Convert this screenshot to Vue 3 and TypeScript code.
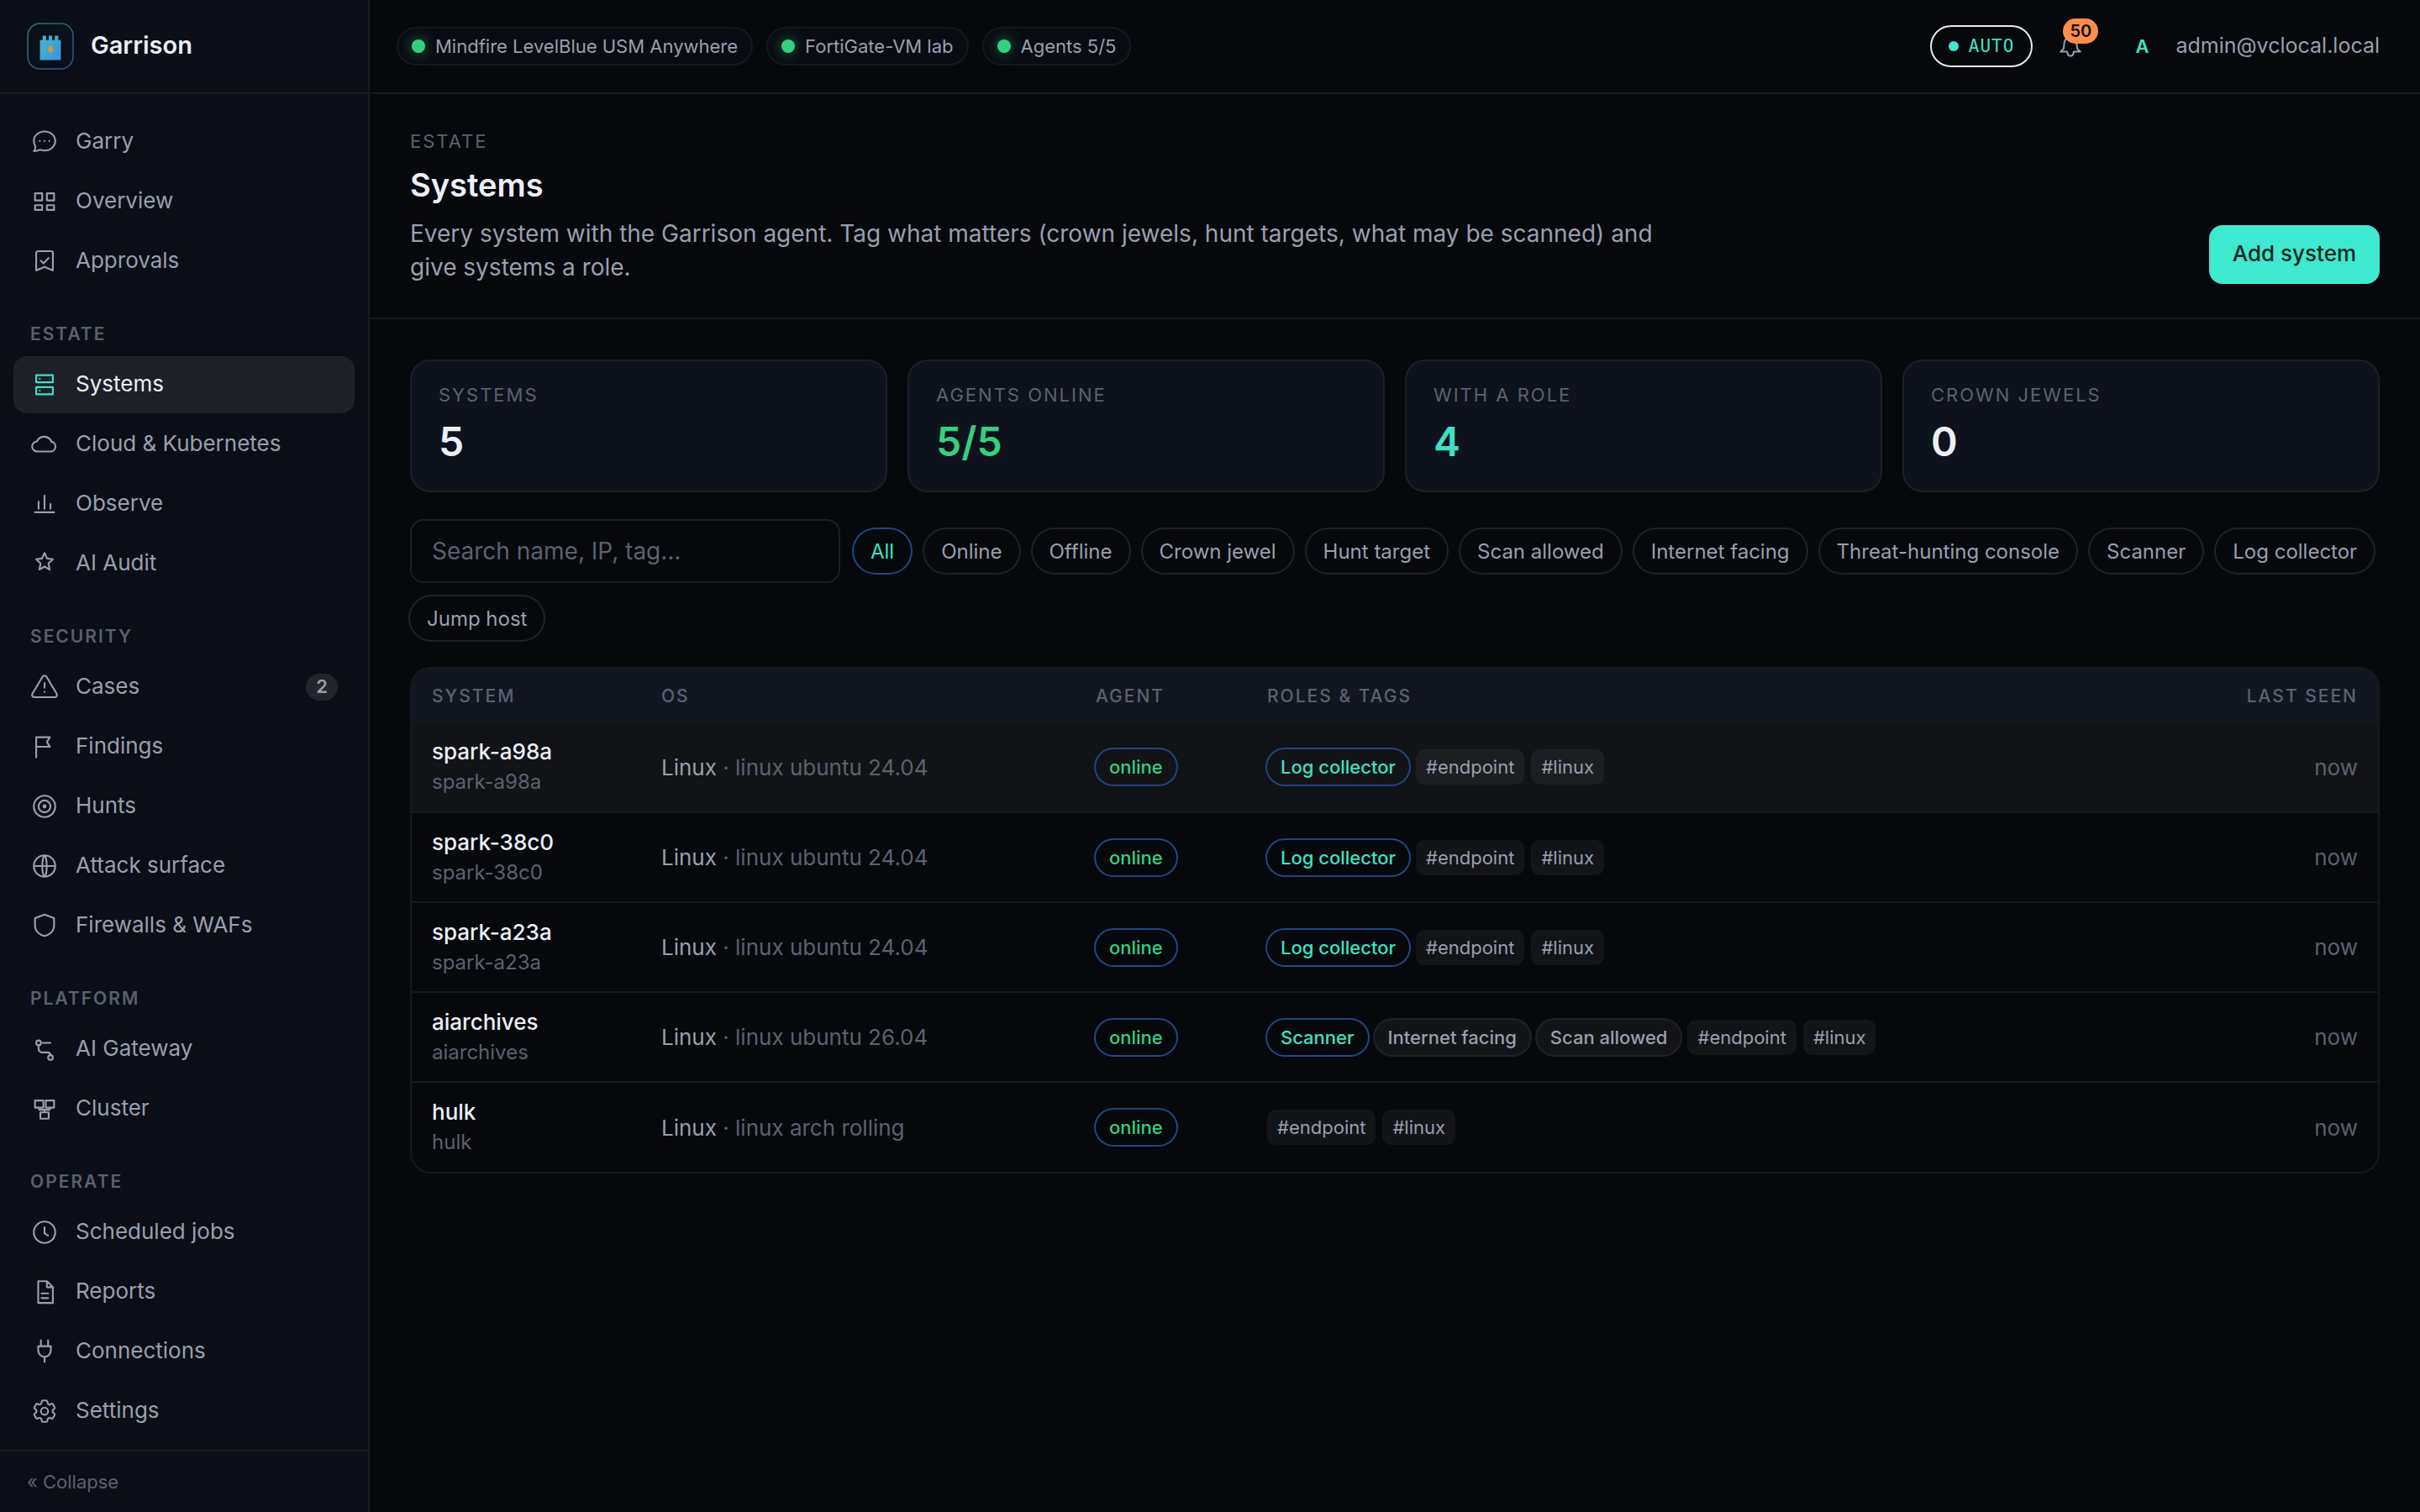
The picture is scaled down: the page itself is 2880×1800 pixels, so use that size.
<script setup lang="ts">
import { ref } from 'vue'

interface NavItem {
  label: string
  icon: string
  active?: boolean
  count?: number
}
interface NavGroup {
  title?: string
  items: NavItem[]
}
interface SystemRow {
  name: string
  host: string
  family: string
  distro: string
  role?: string
  flags: string[]
  tags: string[]
}

const nav: NavGroup[] = [
  {
    items: [
      { label: 'Garry', icon: 'chat' },
      { label: 'Overview', icon: 'grid' },
      { label: 'Approvals', icon: 'approve' },
    ],
  },
  {
    title: 'Estate',
    items: [
      { label: 'Systems', icon: 'server', active: true },
      { label: 'Cloud & Kubernetes', icon: 'cloud' },
      { label: 'Observe', icon: 'bars' },
      { label: 'AI Audit', icon: 'star' },
    ],
  },
  {
    title: 'Security',
    items: [
      { label: 'Cases', icon: 'alert', count: 2 },
      { label: 'Findings', icon: 'flag' },
      { label: 'Hunts', icon: 'target' },
      { label: 'Attack surface', icon: 'globe' },
      { label: 'Firewalls & WAFs', icon: 'shield' },
    ],
  },
  {
    title: 'Platform',
    items: [
      { label: 'AI Gateway', icon: 'route' },
      { label: 'Cluster', icon: 'cluster' },
    ],
  },
  {
    title: 'Operate',
    items: [
      { label: 'Scheduled jobs', icon: 'clock' },
      { label: 'Reports', icon: 'file' },
      { label: 'Connections', icon: 'plug' },
      { label: 'Settings', icon: 'gear' },
    ],
  },
]

const icons: Record<string, string> = {
  chat: 'M12 3.2c5 0 9 3.5 9 8s-4 8-9 8c-1.400 0-2.700-.3-3.800-.7-1.500.8-3.200 1.200-5.100 1.200 1.100-1.300 1.500-2.500 1.200-4C3.500 14.400 3 12.900 3 11.200c0-4.500 4-8 9-8zM8 11.200h.01M12 11.200h.01M16 11.200h.01',
  grid: 'M4 5h6v6H4zM14 5h6v6h-6zM4 15h6v4H4zM14 15h6v4h-6z',
  approve: 'M5 19.700V5a1.500 1.500 0 0 1 1.500-1.500h11A1.500 1.500 0 0 1 19 5v14.700l-7-3-7 3zM8.800 11.500l2.300 2.300 4.300-4.500',
  server: 'M5 4h14v6H5zM5 14h14v6H5zM8 7h.01M8 17h.01',
  cloud: 'M6 18a4.200 4.200 0 0 1-.3-8.500 6.500 6.500 0 0 1 12.100.3A4.150 4.150 0 0 1 17.500 18z',
  bars: 'M4 19h16M7 16v-6M12 16V5M17 16v-4',
  star: 'M12 3l2.100 4.700 4.900.6-3.700 3.500 1 5.200-4.300-2.500-4.300 2.500 1-5.200L5 8.300l4.900-.6z',
  alert: 'M10.290 3.360L1.820 17.500a2 2 0 0 0 1.710 3h16.940a2 2 0 0 0 1.710-3L13.710 3.360a2 2 0 0 0-3.420 0zM12 8.500v4M12 16h.01',
  flag: 'M5 21V4h11.500l-2.500 4 2.500 4H5',
  target: 'M21 12a9 9 0 1 1-18 0 9 9 0 0 1 18 0zM17 12a5 5 0 1 1-10 0 5 5 0 0 1 10 0zM13 12a1 1 0 1 1-2 0 1 1 0 0 1 2 0z',
  globe: 'M21 12a9 9 0 1 1-18 0 9 9 0 0 1 18 0zM3 12h18M12 3c2.500 2.700 2.500 15.300 0 18M12 3c-2.500 2.700-2.500 15.300 0 18',
  shield: 'M12 2.700l8 3V12c0 4.600-3.600 7.600-8 8.600-4.400-1-8-4-8-8.600V5.700z',
  route: 'M9 6.700a2 2 0 1 1-4 0 2 2 0 0 1 4 0zM19 19a2 2 0 1 1-4 0 2 2 0 0 1 4 0zM10.500 6.700H17M7 8.700v3a3 3 0 0 0 3 3h4.500a2.500 2.500 0 0 1 2.500 2.300',
  cluster: 'M4 5h7v6H4zM13 5h7v6h-7zM8.500 15h7v5.300h-7zM7.500 11v1.800h9V11M12 12.800V15',
  clock: 'M21 12a9 9 0 1 1-18 0 9 9 0 0 1 18 0zM12 7.800V13l3 1.700',
  file: 'M6.700 3h7.300l5 5v13.300H6.700zM14 3v5h5M9.500 13.200h5.500M9.500 17.200h5.500',
  plug: 'M9 2.500v5M15 2.500v5M6.700 7.500h10.600v3.600a5.300 5.300 0 0 1-10.600 0zM12 16.400v4.300',
  gear: 'M9.594 3.940c.09-.542.56-.94 1.110-.94h2.593c.55 0 1.020.398 1.110.94l.213 1.281c.063.374.313.686.645.87.074.04.147.083.22.127.325.196.72.257 1.075.124l1.217-.456a1.125 1.125 0 0 1 1.370.49l1.296 2.247a1.125 1.125 0 0 1-.26 1.431l-1.003.827c-.293.241-.438.613-.43.992a7.723 7.723 0 0 1 0 .255c-.008.378.137.75.43.991l1.004.827c.424.35.534.955.26 1.430l-1.298 2.247a1.125 1.125 0 0 1-1.369.491l-1.217-.456c-.355-.133-.75-.072-1.076.124a6.470 6.470 0 0 1-.22.128c-.331.183-.581.495-.644.869l-.213 1.281c-.09.543-.56.94-1.110.94h-2.594c-.55 0-1.019-.398-1.110-.94l-.213-1.281c-.062-.374-.312-.686-.644-.87a6.520 6.520 0 0 1-.22-.127c-.325-.196-.72-.257-1.076-.124l-1.217.456a1.125 1.125 0 0 1-1.369-.49l-1.297-2.247a1.125 1.125 0 0 1 .26-1.431l1.004-.827c.292-.24.437-.613.43-.991a6.932 6.932 0 0 1 0-.255c.007-.38-.138-.751-.43-.992l-1.004-.827a1.125 1.125 0 0 1-.26-1.430l1.297-2.247a1.125 1.125 0 0 1 1.370-.491l1.216.456c.356.133.751.072 1.076-.124.072-.044.146-.086.22-.128.332-.183.582-.495.644-.869l.214-1.280zM15 12a3 3 0 1 1-6 0 3 3 0 0 1 6 0z',
}

const links = ['Mindfire LevelBlue USM Anywhere', 'FortiGate-VM lab', 'Agents 5/5']

const stats = [
  { label: 'Systems', value: '5', tone: '' },
  { label: 'Agents online', value: '5/5', tone: 'good' },
  { label: 'With a role', value: '4', tone: 'accent' },
  { label: 'Crown jewels', value: '0', tone: '' },
]

const filters = [
  'All',
  'Online',
  'Offline',
  'Crown jewel',
  'Hunt target',
  'Scan allowed',
  'Internet facing',
  'Threat-hunting console',
  'Scanner',
  'Log collector',
  'Jump host',
]
const activeFilter = ref('All')
const query = ref('')

const base = ['#endpoint', '#linux']
const rows: SystemRow[] = [
  { name: 'spark-a98a', host: 'spark-a98a', family: 'Linux', distro: 'linux ubuntu 24.04', role: 'Log collector', flags: [], tags: base },
  { name: 'spark-38c0', host: 'spark-38c0', family: 'Linux', distro: 'linux ubuntu 24.04', role: 'Log collector', flags: [], tags: base },
  { name: 'spark-a23a', host: 'spark-a23a', family: 'Linux', distro: 'linux ubuntu 24.04', role: 'Log collector', flags: [], tags: base },
  { name: 'aiarchives', host: 'aiarchives', family: 'Linux', distro: 'linux ubuntu 26.04', role: 'Scanner', flags: ['Internet facing', 'Scan allowed'], tags: base },
  { name: 'hulk', host: 'hulk', family: 'Linux', distro: 'linux arch rolling', flags: [], tags: base },
]
</script>

<template>
  <div class="shell">
    <aside class="sidebar">
      <div class="brand">
        <svg class="logo" viewBox="0 0 54 54" aria-hidden="true">
          <defs>
            <linearGradient id="edge" x1="0" y1="0" x2="1" y2="1">
              <stop offset="0" stop-color="#2f7468" />
              <stop offset="1" stop-color="#2b4f86" />
            </linearGradient>
            <linearGradient id="keep" x1="0" y1="0" x2="1" y2="1">
              <stop offset="0" stop-color="#45bccb" />
              <stop offset="1" stop-color="#3d8fdf" />
            </linearGradient>
          </defs>
          <rect x="1" y="1" width="52" height="52" rx="14" fill="#0a111a" stroke="url(#edge)" stroke-width="1.500" />
          <path d="M15 20h3v-5h4v5h3v-5h4v5h3v-5h4v5h3v23H15z" fill="url(#keep)" />
          <ellipse cx="27" cy="30.500" rx="3" ry="4" fill="#c79a4a" />
        </svg>
        <span class="brand-name">Garrison</span>
      </div>

      <nav class="nav" aria-label="Main">
        <div v-for="(group, gi) in nav" :key="gi" class="nav-group">
          <h2 v-if="group.title" class="nav-title">{{ group.title }}</h2>
          <a
            v-for="item in group.items"
            :key="item.label"
            href="#"
            class="nav-item"
            :class="{ active: item.active }"
            :aria-current="item.active ? 'page' : undefined"
          >
            <svg class="icon" viewBox="0 0 24 24" aria-hidden="true"><path :d="icons[item.icon]" /></svg>
            <span class="nav-label">{{ item.label }}</span>
            <span v-if="item.count" class="count">{{ item.count }}</span>
          </a>
        </div>
      </nav>

      <button type="button" class="collapse">« Collapse</button>
    </aside>

    <div class="main">
      <header class="topbar">
        <div class="links">
          <span v-for="l in links" :key="l" class="link-pill"><i class="dot"></i>{{ l }}</span>
        </div>
        <div class="account">
          <button type="button" class="auto"><i class="auto-dot"></i>AUTO</button>
          <button type="button" class="bell" aria-label="Notifications">
            <svg class="bell-icon" viewBox="0 0 24 24" aria-hidden="true">
              <path d="M12 3.500a6 6 0 0 0-6 6c0 3.200-.3 4.600-1.200 5.700L2.600 17.200H9c0 5.400 6 5.400 6 0h6.400l-2.200-2c-.9-1.100-1.200-2.500-1.200-5.700a6 6 0 0 0-6-6z" />
            </svg>
            <span class="bell-count">50</span>
          </button>
          <span class="avatar">A</span>
          <span class="email">admin@vclocal.local</span>
        </div>
      </header>

      <section class="page-head">
        <div class="page-text">
          <p class="eyebrow">Estate</p>
          <h1>Systems</h1>
          <p class="lead">
            Every system with the Garrison agent. Tag what matters (crown jewels, hunt targets, what may be scanned) and
            give systems a role.
          </p>
        </div>
        <button type="button" class="primary">Add system</button>
      </section>

      <main class="content">
        <div class="stats">
          <div v-for="s in stats" :key="s.label" class="stat">
            <div class="stat-label">{{ s.label }}</div>
            <div class="stat-value" :class="s.tone">{{ s.value }}</div>
          </div>
        </div>

        <div class="filters">
          <input v-model="query" type="search" class="search" placeholder="Search name, IP, tag…" aria-label="Search systems" />
          <button
            v-for="f in filters"
            :key="f"
            type="button"
            class="chip"
            :class="{ on: f === activeFilter }"
            @click="activeFilter = f"
          >
            {{ f }}
          </button>
        </div>

        <div class="table-wrap">
          <table>
            <colgroup>
              <col class="c-system" />
              <col class="c-os" />
              <col class="c-agent" />
              <col />
              <col class="c-seen" />
            </colgroup>
            <thead>
              <tr>
                <th scope="col">System</th>
                <th scope="col">OS</th>
                <th scope="col">Agent</th>
                <th scope="col">Roles &amp; tags</th>
                <th scope="col" class="right">Last seen</th>
              </tr>
            </thead>
            <tbody>
              <tr v-for="(r, i) in rows" :key="r.name" :class="{ hovered: i === 0 }">
                <td>
                  <div class="name">{{ r.name }}</div>
                  <div class="host">{{ r.host }}</div>
                </td>
                <td>{{ r.family }} <span class="dim">· {{ r.distro }}</span></td>
                <td>
                  <div class="tags"><span class="badge online">online</span></div>
                </td>
                <td>
                  <div class="tags">
                    <span v-if="r.role" class="badge role">{{ r.role }}</span>
                    <span v-for="f in r.flags" :key="f" class="badge flag">{{ f }}</span>
                    <span v-for="t in r.tags" :key="t" class="tag">{{ t }}</span>
                  </div>
                </td>
                <td class="right dim">now</td>
              </tr>
            </tbody>
          </table>
        </div>
      </main>
    </div>
  </div>
</template>

<style>
body {
  margin: 0;
  background: #06080c;
}
</style>

<style scoped>
* {
  box-sizing: border-box;
}
.shell {
  display: flex;
  min-height: 100vh;
  background: #06080c;
  color: #9a9fae;
  font-family: Inter, "Liberation Sans", sans-serif;
  font-size: 26px;
}
button,
input {
  font: inherit;
  color: inherit;
  margin: 0;
}
button {
  cursor: pointer;
  border: 0;
  background: none;
  padding: 0;
}
h1,
h2,
p {
  margin: 0;
}

/* sidebar */
.sidebar {
  width: 440px;
  flex: none;
  display: flex;
  flex-direction: column;
  background: #0b0e16;
  border-right: 2px solid #171a20;
}
.brand {
  display: flex;
  align-items: center;
  gap: 20px;
  height: 112px;
  padding: 0 32px;
  border-bottom: 2px solid #171a20;
}
.logo {
  width: 56px;
  height: 56px;
}
.brand-name {
  padding-bottom: 4px;
  font-size: 29px;
  font-weight: 600;
  color: #eceef8;
}
.nav {
  flex: 1;
  padding: 23px 16px 0;
}
.nav-group {
  display: flex;
  flex-direction: column;
  gap: 3px;
}
.nav-title {
  padding: 41px 20px 11px;
  font-size: 21px;
  line-height: 24px;
  font-weight: 600;
  letter-spacing: 2px;
  text-transform: uppercase;
  color: #596070;
}
.nav-item {
  display: flex;
  align-items: center;
  gap: 20px;
  height: 68px;
  padding: 0 20px;
  border-radius: 16px;
  color: #9a9fae;
  text-decoration: none;
}
.nav-item.active {
  background: #1d2027;
  color: #eceef8;
}
.nav-label {
  flex: 1;
  padding-bottom: 3px;
}
.icon {
  width: 34px;
  height: 34px;
  fill: none;
  stroke: currentColor;
  stroke-width: 1.5;
  stroke-linecap: round;
  stroke-linejoin: round;
}
.active .icon {
  color: #3fe0c5;
}
.count {
  min-width: 38px;
  height: 32px;
  border-radius: 16px;
  background: #22252b;
  font-size: 22px;
  line-height: 30px;
  font-weight: 600;
  text-align: center;
}
.collapse {
  height: 74px;
  padding: 0 32px;
  border-top: 2px solid #171a20;
  font-size: 22px;
  text-align: left;
  color: #5c6170;
}

/* top bar */
.main {
  flex: 1;
  min-width: 0;
}
.topbar {
  display: flex;
  align-items: center;
  justify-content: space-between;
  height: 112px;
  padding: 0 48px 0 32px;
  border-bottom: 2px solid #15181c;
}
.links {
  display: flex;
  gap: 16px;
}
.link-pill {
  display: flex;
  align-items: center;
  gap: 12px;
  height: 46px;
  padding: 0 16px;
  border: 2px solid #15181d;
  border-radius: 23px;
  background: #090b12;
  font-size: 22px;
}
.dot {
  width: 16px;
  height: 16px;
  border-radius: 50%;
  background: #35d07f;
  box-shadow: 0 0 16px #1d7a4b;
}
.account {
  display: flex;
  align-items: center;
}
.auto {
  display: flex;
  align-items: center;
  gap: 12px;
  height: 50px;
  padding: 0 20px;
  border: 2px solid #e8eaee;
  border-radius: 25px;
  font-family: "DejaVu Sans Mono", monospace;
  font-size: 21px;
  letter-spacing: 1px;
  color: #3fe0c5;
}
.auto-dot {
  width: 12px;
  height: 12px;
  border-radius: 50%;
  background: #3fe9d0;
}
.bell {
  position: relative;
  display: flex;
  margin-left: 30px;
}
.bell-icon {
  width: 30px;
  height: 30px;
  fill: none;
  stroke: #9a9fae;
  stroke-width: 1.6;
  stroke-linejoin: round;
}
.bell-count {
  position: absolute;
  top: -18px;
  left: 6px;
  min-width: 42px;
  height: 30px;
  border-radius: 15px;
  background: #ff8c4b;
  font-size: 20px;
  line-height: 30px;
  font-weight: 600;
  text-align: center;
  color: #0b0c10;
}
.avatar {
  width: 52px;
  margin-left: 44px;
  font-size: 22px;
  font-weight: 600;
  text-align: center;
  color: #3fe0c5;
}
.email {
  padding-bottom: 3px;
  margin-left: 14px;
  font-size: 25px;
}

/* page heading */
.page-head {
  display: flex;
  align-items: flex-end;
  justify-content: space-between;
  padding: 40px 48px;
  border-bottom: 2px solid #15181c;
}
.eyebrow {
  font-size: 22px;
  line-height: 32px;
  letter-spacing: 2px;
  text-transform: uppercase;
  color: #5c6170;
}
h1 {
  padding: 12px 0 14px;
  font-size: 38px;
  line-height: 48px;
  font-weight: 600;
  color: #eceef8;
}
.lead {
  max-width: 1520px;
  font-size: 28px;
  line-height: 40px;
}
.primary {
  height: 70px;
  padding: 0 28px 3px;
  border-radius: 16px;
  background: #3fe9d0;
  font-size: 26px;
  font-weight: 500;
  color: #06281f;
}

/* content */
.content {
  display: flex;
  flex-direction: column;
  gap: 32px;
  padding: 48px;
}
.stats {
  display: grid;
  grid-template-columns: repeat(4, 1fr);
  gap: 24px;
}
.stat {
  height: 158px;
  padding: 24px 32px;
  border: 2px solid #1a1f28;
  border-radius: 24px;
  background: #0d121c;
}
.stat-label {
  font-size: 22px;
  line-height: 32px;
  letter-spacing: 2px;
  text-transform: uppercase;
  color: #5c6170;
}
.stat-value {
  padding-top: 10px;
  font-size: 48px;
  line-height: 60px;
  font-weight: 600;
  color: #eceef8;
}
.good {
  color: #35d07f;
}
.accent {
  color: #3fe0c5;
}
.filters {
  display: flex;
  flex-wrap: wrap;
  align-items: center;
  gap: 16px;
}
.search {
  width: 512px;
  height: 76px;
  padding: 0 24px;
  border: 2px solid #1c1e22;
  border-radius: 16px;
  background: #06080c;
  font-size: 28px;
  appearance: none;
  outline: none;
}
.search::placeholder {
  color: #5c6170;
  opacity: 1;
}
.chip {
  height: 52px;
  padding: 0 20px;
  border-radius: 26px;
  box-shadow: 0 0 0 2px #1f2125;
  font-size: 24px;
}
.chip.on {
  box-shadow: 0 0 0 2px #234580;
  color: #3fe0c5;
}

/* table */
.table-wrap {
  overflow: hidden;
  border: 2px solid #15181c;
  border-radius: 24px;
}
table {
  width: 100%;
  border-collapse: collapse;
  table-layout: fixed;
}
.c-system {
  width: 273px;
}
.c-os {
  width: 517px;
}
.c-agent {
  width: 204px;
}
.c-seen {
  width: 220px;
}
th {
  height: 64px;
  padding: 0 24px;
  background: #111620;
  font-size: 21px;
  font-weight: 500;
  letter-spacing: 2px;
  text-align: left;
  text-transform: uppercase;
  color: #5c6170;
}
td {
  height: 107px;
  padding: 0 24px;
  border-top: 2px solid #15181c;
}
tbody tr:first-child td {
  border-top: 0;
}
.hovered {
  background: #111316;
}
.right {
  text-align: right;
}
.name {
  font-weight: 500;
  line-height: 36px;
  color: #eceef8;
}
.host {
  font-size: 24px;
  line-height: 36px;
  color: #5c6170;
}
.dim {
  color: #5c6170;
}
.tags {
  display: flex;
  align-items: center;
  gap: 8px;
}
.badge,
.tag {
  height: 42px;
  line-height: 42px;
  font-size: 22px;
  white-space: nowrap;
}
.badge {
  padding: 0 16px;
  border-radius: 21px;
  font-weight: 500;
  box-shadow: 0 0 0 2px #234580;
}
.online {
  color: #35d07f;
}
.role {
  color: #3fe0c5;
}
.flag {
  background: #121418;
  box-shadow: 0 0 0 2px #1f2125;
}
.tag {
  padding: 0 12px;
  border-radius: 10px;
  background: #121418;
}
.hovered .tag {
  background: #1c1e22;
}
</style>
